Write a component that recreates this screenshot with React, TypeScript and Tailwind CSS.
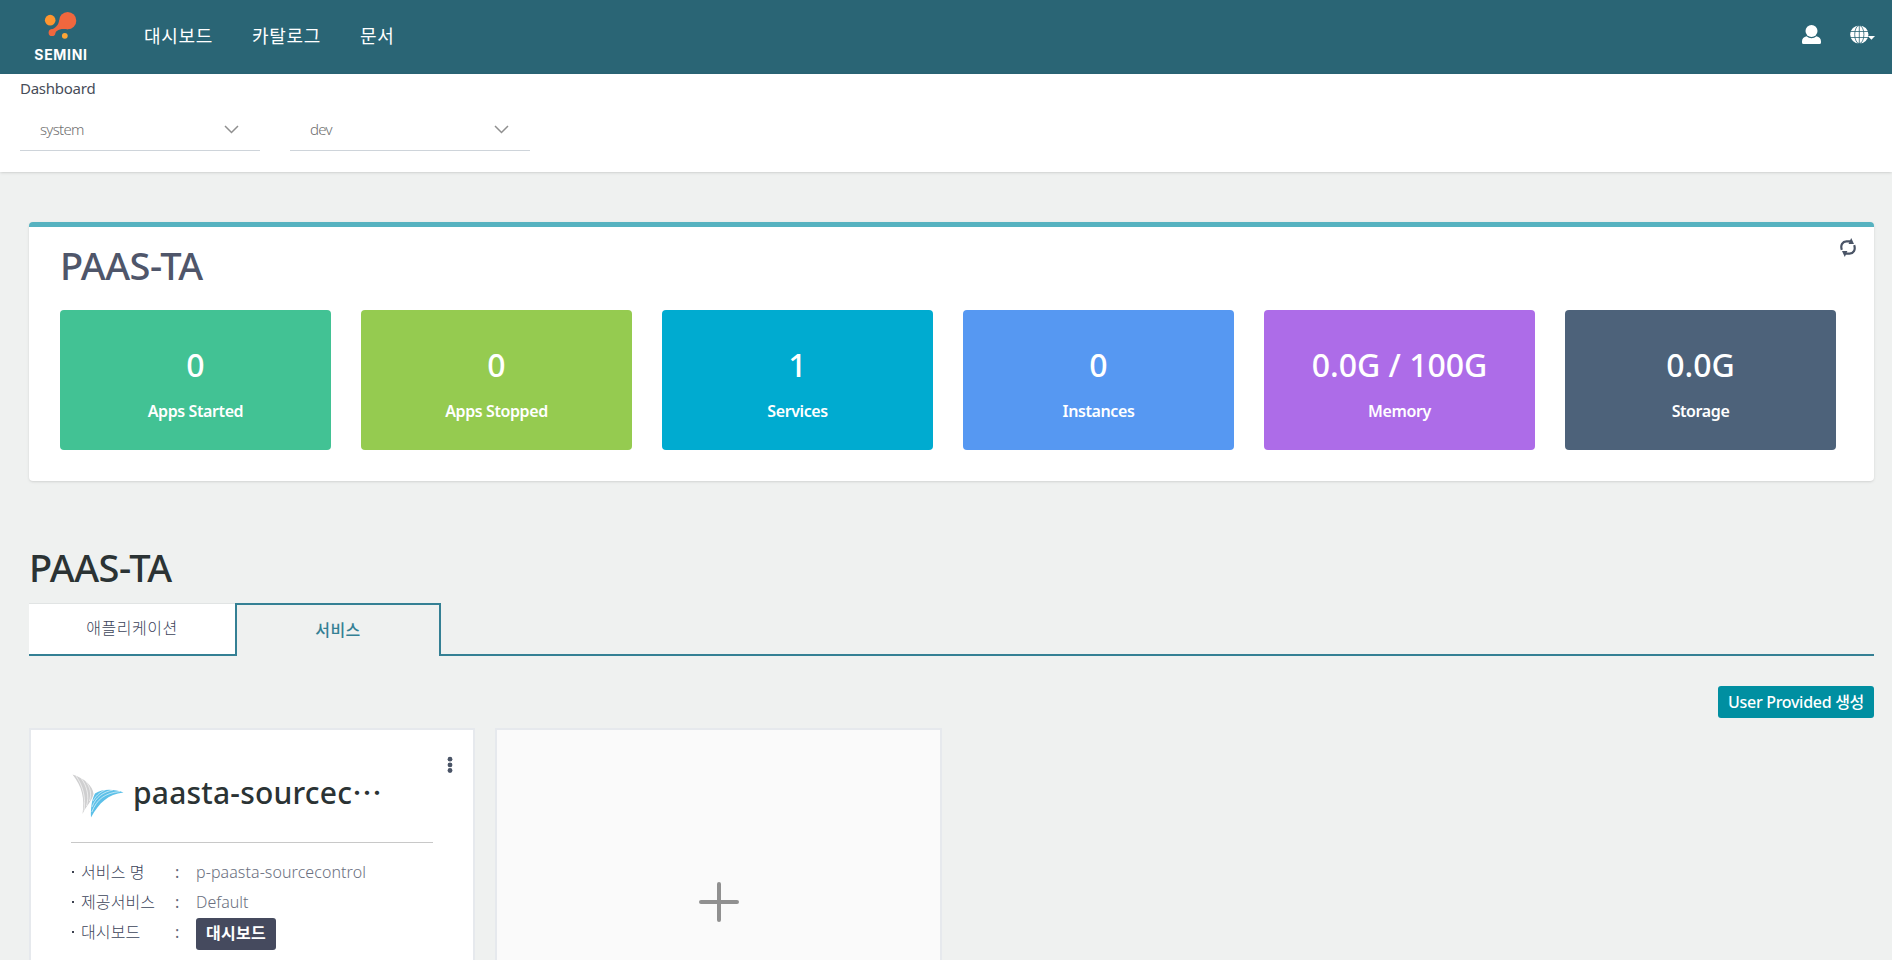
import React from 'react';

const stats = [
  { value: '0', label: 'Apps Started', bg: 'bg-[#42c294]' },
  { value: '0', label: 'Apps Stopped', bg: 'bg-[#95cb50]' },
  { value: '1', label: 'Services', bg: 'bg-[#00abd0]' },
  { value: '0', label: 'Instances', bg: 'bg-[#5698f2]' },
  { value: '0.0G / 100G', label: 'Memory', bg: 'bg-[#ad6ce8]' },
  { value: '0.0G', label: 'Storage', bg: 'bg-[#4d627a]' },
];

function Logo() {
  return (
    <div className="flex w-[60px] flex-col items-center">
      <svg width="34" height="30" viewBox="0 0 34 30">
        <ellipse cx="6.2" cy="9.2" rx="5.300" ry="5.400" fill="#ff952f" />
        <circle cx="23.7" cy="9.7" r="8.600" fill="#f0673e" />
        <circle cx="8" cy="21.700" r="3.400" fill="#f0673e" />
        <path d="M15.100 9C15 14 11 17.500 6.500 18.700L10.500 24C11.500 19.500 15 17 24 18.300Z" fill="#f0673e" />
        <circle cx="20.800" cy="24.800" r="2.900" fill="#fca636" />
      </svg>
      <span className="mt-[7px] font-['Inter',sans-serif] text-[14px] leading-[14px] font-bold tracking-[0.7px] text-white">
        SEMINI
      </span>
    </div>
  );
}

function UserIcon() {
  return (
    <svg width="19" height="19" viewBox="0 0 19 19" fill="currentColor">
      <ellipse cx="9.500" cy="6" rx="6" ry="6" />
      <path d="M4.600 11.300C6 12.600 7.600 13.200 9.500 13.200S13 12.600 14.400 11.300C17.300 12 19 13.600 19 16.500V17.500Q19 19 17.500 19H1.500Q0 19 0 17.500V16.500C0 13.600 1.700 12 4.600 11.300Z" />
    </svg>
  );
}

function GlobeIcon() {
  return (
    <svg width="25" height="19" viewBox="0 0 25 19">
      <circle cx="9.300" cy="9.500" r="9.100" fill="#fff" />
      <g fill="none" stroke="#2a6575" strokeWidth="0.800">
        <path d="M0 6.500H19M0 12.500H19M9.300 0V19" />
        <ellipse cx="9.300" cy="9.500" rx="4.600" ry="9.100" />
      </g>
      <path d="M17.800 11H25L21.400 14.800Z" fill="#fff" />
    </svg>
  );
}

function RefreshIcon() {
  return (
    <svg width="16" height="19" viewBox="0 0 16 19" fill="none" stroke="#4a5466" strokeWidth="2.200">
      <path d="M1.800 11.800C0.200 7 2.500 3.500 6.500 3.300H11" />
      <path d="M14.200 7.200C15.800 12 13.500 15.500 9.500 15.700H5" />
      <path d="M11.200 0L14 6.100L8.600 5.900Z" fill="#4a5466" stroke="none" />
      <path d="M4.800 19L2 12.900L7.400 13.100Z" fill="#4a5466" stroke="none" />
    </svg>
  );
}

function WingIcon() {
  return (
    <svg width="52" height="44" viewBox="0 0 52 44">
      <path d="M0.500 0.500C12 4 21 12 21.500 20C20 27 14 32 10.500 40C13 25 10 12 0.500 0.500Z" fill="#cfcfd0" />
      <path d="M4 2C11 12 14 24 12 37M9 4C15 12 17.500 22 14.500 32M14 7.500C18 13 20 20 17.500 27" fill="none" stroke="#fff" strokeWidth="0.600" />
      <path d="M19 43.500C18.500 34 20 25 23 19.500C32 14 43 15.500 51.500 18.500C36 20 27 29 19 43.500Z" fill="#5cc0e8" />
      <path d="M19.800 38C25 25 33 19 48 17.500M20 33C24 23 31 18 41 16M21 27C25 20 29 18 34 15.500" fill="none" stroke="#fff" strokeWidth="0.600" />
    </svg>
  );
}

function Select({ value }: { value: string }) {
  return (
    <div className="flex h-[43px] w-[240px] items-center justify-between border-b border-[#ced4da] pr-[21px] pl-5">
      <span className="text-[15px] font-light tracking-[-0.7px] text-[#6f6f6f]">{value}</span>
      <svg width="15" height="9" viewBox="0 0 15 9" fill="none" stroke="#8f8f8f" strokeWidth="1.500">
        <path d="M1 1L7.500 7.500L14 1" />
      </svg>
    </div>
  );
}

function Row({ label, children }: { label: string; children: React.ReactNode }) {
  return (
    <div className="flex h-[30px] items-center text-[16px]">
      <span className="mr-[7px] ml-[1px] size-[2px] bg-[#3c4250]" />
      <span className="w-[94px] text-[16px] font-light tracking-[0.1px] text-[#3c445a]">{label}</span>
      <span className="w-[21px] text-[#5f6576]">:</span>
      {children}
    </div>
  );
}

export default function App() {
  return (
    <div className="h-[960px] overflow-hidden bg-[#eff1f0] font-['Noto_Sans','Noto_Sans_CJK_KR',sans-serif]">
      <header className="flex h-[74px] items-start bg-[#2a6575] text-white">
        <div className="mt-[11px] ml-[31px]"><Logo /></div>
        <nav className="mt-[21px] ml-[53px] flex gap-[39px] text-[18px] leading-[30px] tracking-[0.7px]">
          <span>대시보드</span>
          <span>카탈로그</span>
          <span>문서</span>
        </nav>
        <div className="mt-[25px] mr-[17px] ml-auto flex items-center gap-[29px]">
          <UserIcon />
          <GlobeIcon />
        </div>
      </header>
      <section className="h-[98px] bg-white px-5 pt-1 shadow">
        <h1 className="text-[15px] leading-5 tracking-[-0.25px] text-[#474c58]">Dashboard</h1>
        <div className="mt-[10px] flex gap-[30px]">
          <Select value="system" />
          <Select value="dev" />
        </div>
      </section>
      <main className="pr-[18px] pl-[29px]">
        <section className="relative mt-[50px] h-[259px] rounded border-t-[5px] border-[#56b2c0] bg-white px-[31px] shadow">
          <h2 className="pt-[10px] text-[38px] leading-[56px] font-medium tracking-[-0.5px] text-[#4f566a]">PAAS-TA</h2>
          <div className="absolute top-[11px] right-[18px]"><RefreshIcon /></div>
          <div className="mt-[17px] grid grid-cols-[repeat(6,271px)] gap-[30px]">
            {stats.map((s) => (
              <div key={s.label} className={`flex h-[140px] flex-col items-center rounded text-white ${s.bg}`}>
                <span className="mt-[34px] text-[32px] leading-[42px] font-medium">{s.value}</span>
                <span className="mt-[13px] text-[16px] leading-6 font-semibold tracking-[-0.4px]">{s.label}</span>
              </div>
            ))}
          </div>
        </section>
        <h2 className="mt-[60px] text-[38px] leading-[52px] font-medium tracking-[-0.5px] text-[#2b3334]">PAAS-TA</h2>
        <div className="mt-[10px] flex h-[53px]">
          <div className="w-[206px] border-t border-b-2 border-t-[#e1e4e4] border-b-[#348094] bg-white text-center text-[16px] leading-[49px] font-light tracking-[0.5px] text-[#3c445a]">
            애플리케이션
          </div>
          <div className="w-[206px] border-2 border-b-0 border-[#348094] text-center text-[16px] leading-[50px] font-medium tracking-[0.4px] text-[#348094]">
            서비스
          </div>
          <div className="flex-1 border-b-2 border-[#348094]" />
        </div>
        <div className="mt-[30px] flex justify-end">
          <button className="h-8 w-[156px] rounded-[3px] bg-[#008fa1] text-[16px] leading-8 font-medium tracking-[-0.3px] whitespace-nowrap text-white">
            User Provided 생성
          </button>
        </div>
        <div className="mt-[10px] flex gap-5">
          <article className="relative h-[300px] w-[446px] border-2 border-[#e6e9ed] bg-white px-[40px]">
            <svg className="absolute top-[26px] right-[20px]" width="6" height="18" viewBox="0 0 6 18" fill="#4a5466">
              <circle cx="3" cy="3.200" r="2.400" />
              <circle cx="3" cy="8.900" r="2.400" />
              <circle cx="3" cy="14.500" r="2.400" />
            </svg>
            <div className="flex h-[113px] items-start border-b border-[#c8c8c8]">
              <div className="mt-[44px] ml-[1px]"><WingIcon /></div>
              <h3 className="mt-[37px] ml-[9px] text-[30px] leading-[48px] font-medium tracking-[0.2px] text-[#2b3334]">
                paasta-sourcec<span className="font-['Noto_Sans_CJK_KR',sans-serif]" lang="ko">…</span>
              </h3>
            </div>
            <div className="mt-[14px]">
              <Row label="서비스 명">
                <span className="font-light tracking-[0.08px] text-[#6b7080]">p-paasta-sourcecontrol</span>
              </Row>
              <Row label="제공서비스">
                <span className="font-light text-[#6b7080]">Default</span>
              </Row>
              <Row label="대시보드">
                <button className="mt-[3px] h-8 w-20 rounded-[3px] bg-[#454a5e] text-[16px] leading-[29px] font-bold tracking-[0.3px] text-white">
                  대시보드
                </button>
              </Row>
            </div>
          </article>
          <article className="flex h-[348px] w-[447px] items-center justify-center border-2 border-[#e6e9ed] bg-[#fafafa]">
            <svg width="40" height="40" viewBox="0 0 40 40" stroke="#909090" strokeWidth="4" strokeLinecap="round">
              <path d="M20 2V38M2 20H38" />
            </svg>
          </article>
        </div>
      </main>
    </div>
  );
}
